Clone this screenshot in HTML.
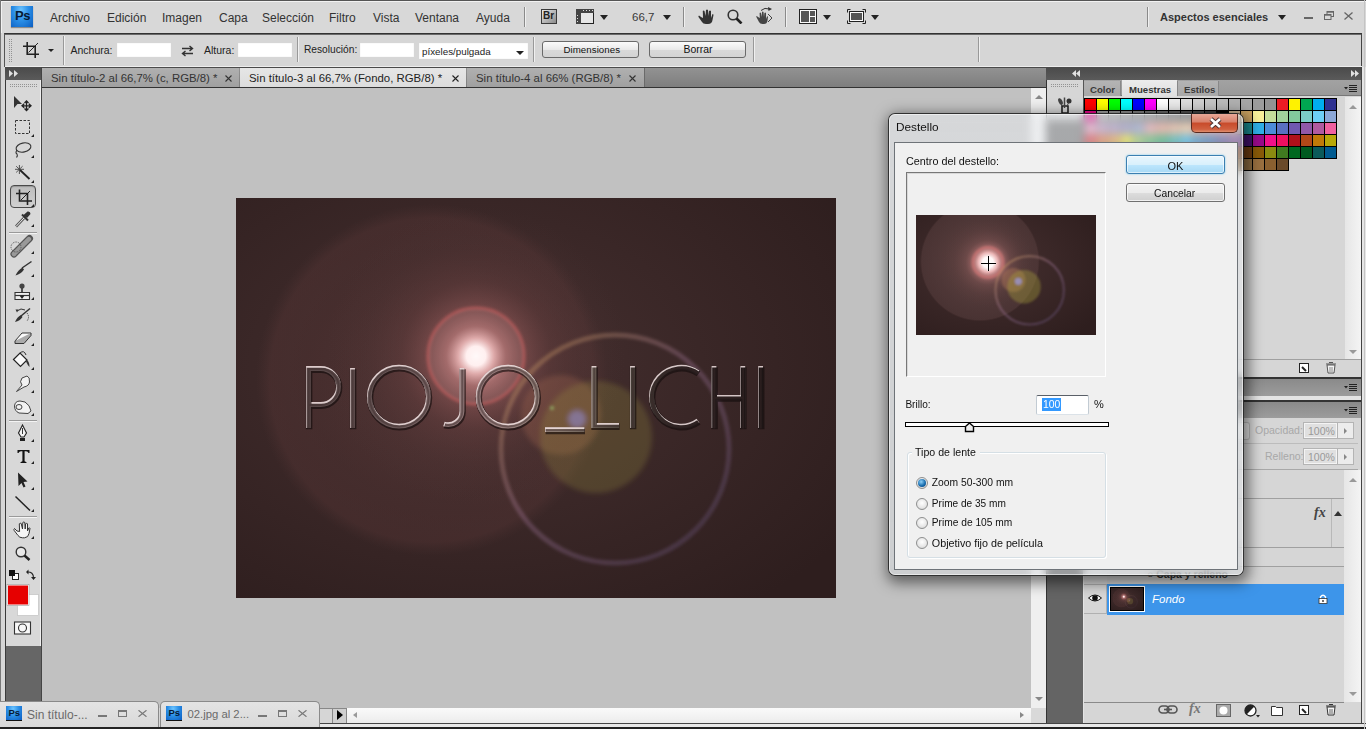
<!DOCTYPE html>
<html><head><meta charset="utf-8">
<style>
*{margin:0;padding:0;box-sizing:border-box}
html,body{width:1366px;height:729px;overflow:hidden;background:#d6d6d6;font-family:"Liberation Sans",sans-serif;position:relative}
.a{position:absolute}
.t{position:absolute;white-space:nowrap;line-height:1}
.mi{top:12px;font-size:12px;color:#333}
.sep{width:1px;height:20px;background:#8a8a8a;border-right:1px solid #f0f0f0;width:2px}
.ol{top:44.7px;font-size:10.5px;color:#222}
.inp{top:43px;height:14px;background:#fff;box-shadow:inset 0 0 1px #ccc}
.btn{top:41px;height:17px;border:1px solid #6a6a6a;border-radius:3px;background:linear-gradient(#fbfbfb,#e9e9e9 50%,#d9d9d9 51%,#d4d4d4)}
.tab{top:68px;height:19px;background:linear-gradient(#b0b0b0,#a0a0a0)}
.tt{top:73px;font-size:11.4px;color:#333}
.tx{top:75px;width:7px;height:7px}
.tsep{left:9px;width:28px;height:1px;background:#9a9a9a;border-bottom:1px solid #f4f4f4;height:2px}
.mw{top:701px;height:26px;border:1px solid #8a8a8a;border-bottom:none;border-radius:5px 5px 0 0;background:linear-gradient(#e4e4e4,#d8d8d8)}
.psi{top:706px;width:16px;height:15px;background:radial-gradient(ellipse at 45% 20%,#6cc4ff 0%,#2a8ee6 45%,#0a5cc0 100%);border-bottom:1px solid #111}
.pst{top:708px;font-size:9.5px;font-weight:bold;color:#071a33}
.mwt{top:708.5px;font-size:12px;color:#6a6a6a}
.pt{top:84.5px;font-size:9.6px;font-weight:bold;color:#3a3a3a}
.pm{width:14px;height:8px}
.sw i{position:absolute;width:11px;height:11px;display:block}
.vbox{left:1303px;width:35px;height:17px;border:1px solid #b4b4b4;background:#e0e0e0;box-shadow:inset 0 0 0 1px #f4f4f4}
.vt{left:1308px;font-size:10.5px;color:#999}
.vbtn{left:1338px;width:16px;height:17px;border:1px solid #b4b4b4;border-left:none;background:#ececec}
.varr{left:1344px;width:0;height:0;border-top:3px solid transparent;border-bottom:3px solid transparent;border-left:3px solid #888}
.dt{color:#111}
.rad{left:916px;width:12px;height:12px;border-radius:50%;border:1px solid #8e8f8f;background:radial-gradient(circle at 50% 40%,#fff,#e6e6e6 60%,#c8c8c8)}
.rl{left:931.8px;font-size:10.3px}
.dots{background-image:linear-gradient(90deg,#8c8c8c 1px,transparent 1px);background-size:2px 2px;-webkit-mask-image:linear-gradient(#000 1px,transparent 1px);-webkit-mask-size:2px 2px;opacity:.9}
.tri{width:0;height:0;border-left:4px solid transparent;border-right:4px solid transparent;border-top:5px solid #222}
</style></head><body>
<!-- outer frame -->
<div class="a" style="left:0;top:0;width:1366px;height:1px;background:#555"></div>
<div class="a" style="left:0;top:0;width:1px;height:729px;background:#777"></div>

<!-- MENU BAR -->
<div id="menubar" class="a" style="left:1px;top:1px;width:1365px;height:32px;background:#d8d8d8;border-top:1px solid #f2f2f2;border-left:1px solid #f2f2f2"></div>
<div class="a" style="left:11px;top:6px;width:22px;height:21px;background:radial-gradient(ellipse at 45% 20%,#6cc4ff 0%,#2a8ee6 45%,#0a5cc0 100%);box-shadow:0 1px 1px rgba(0,0,0,.35)"></div>
<div class="t" style="left:15px;top:9px;font-size:13px;font-weight:bold;color:#071a33;letter-spacing:-0.3px">Ps</div>
<div class="t mi" style="left:50px">Archivo</div>
<div class="t mi" style="left:107px">Edición</div>
<div class="t mi" style="left:162px">Imagen</div>
<div class="t mi" style="left:219px">Capa</div>
<div class="t mi" style="left:262px">Selección</div>
<div class="t mi" style="left:329px">Filtro</div>
<div class="t mi" style="left:373px">Vista</div>
<div class="t mi" style="left:415px">Ventana</div>
<div class="t mi" style="left:476px">Ayuda</div>
<div class="a sep" style="left:524px;top:7px"></div>
<div class="a" style="left:541px;top:9px;width:16px;height:15px;border:1px solid #3a3a3a;background:linear-gradient(135deg,#e8e8e8,#8a8a8a)"></div>
<div class="t" style="left:543px;top:11px;font-size:10px;font-weight:bold;color:#222">Br</div>
<svg class="a" style="left:576px;top:9px" width="18" height="15" viewBox="0 0 18 15"><rect x="0.5" y="0.5" width="17" height="14" fill="#e6e6e6" stroke="#222"/><rect x="0" y="0" width="18" height="4" fill="#444"/><rect x="0" y="0" width="5" height="15" fill="#444"/><g fill="#ddd"><rect x="7" y="1" width="1" height="1"/><rect x="10" y="1" width="1" height="1"/><rect x="13" y="1" width="1" height="1"/><rect x="16" y="1" width="1" height="1"/><rect x="1" y="6" width="1" height="1"/><rect x="1" y="9" width="1" height="1"/><rect x="1" y="12" width="1" height="1"/></g></svg>
<div class="a tri" style="left:600px;top:15px"></div>
<div class="t" style="left:632px;top:12px;font-size:11.5px;color:#3a3a3a">66,7</div>
<div class="a tri" style="left:663px;top:15px"></div>
<div class="a sep" style="left:683px;top:7px"></div>
<svg class="a" style="left:698px;top:9px" width="16" height="15" viewBox="0 0 16 15"><path d="M3 8 L1 6.5 Q0 7 0.5 8 L4 13 Q5 15 8 15 L10 15 Q14 15 14.5 11 L15.5 6 Q15.5 5 14.5 5 L13 9 L13 2 Q12 1 11 2 L10.5 7 L10 1 Q9 0 8 1 L7.5 7 L6.5 2 Q5.5 1 4.8 2 L5 9 Z" fill="#333"/></svg>
<svg class="a" style="left:727px;top:9px" width="16" height="15" viewBox="0 0 16 15"><circle cx="6" cy="6" r="4.8" fill="none" stroke="#333" stroke-width="1.6"/><path d="M9.5 9.5 L14.5 14.5" stroke="#222" stroke-width="2.6"/></svg>
<svg class="a" style="left:756px;top:7px" width="17" height="17" viewBox="0 0 17 17"><path d="M2 10 L0.8 9 Q0 9.5 0.5 10.3 L3 15 Q4 17 6.5 17 L8 17 Q11 17 11.5 13.5 L12 10 Q12 9 11 9.5 L10 12 L10 6 Q9.2 5 8.4 6 L8 10 L7.5 5 Q6.8 4.2 6 5 L5.8 10 L5 6 Q4.3 5.2 3.6 6 L3.8 11 Z" fill="#444"/><path d="M5 3.5 Q9 0 13 2" fill="none" stroke="#333" stroke-width="1"/><path d="M12 0 L16 2 L12.5 4 Z" fill="#333"/><path d="M12 7 L16 11 L12 15" fill="none" stroke="#444" stroke-width="1"/></svg>
<div class="a sep" style="left:785px;top:7px"></div>
<svg class="a" style="left:799px;top:9px" width="18" height="15" viewBox="0 0 18 15"><rect x="0.5" y="0.5" width="17" height="14" fill="#fafafa" stroke="#222"/><rect x="2" y="2" width="8" height="11" fill="#555"/><rect x="11" y="2" width="5" height="5" fill="#555"/><rect x="11" y="8" width="5" height="5" fill="#555"/></svg>
<div class="a tri" style="left:823px;top:15px"></div>
<svg class="a" style="left:847px;top:9px" width="19" height="15" viewBox="0 0 19 15"><path d="M0.5 3.5 V0.5 H3.5 M15.5 0.5 H18.5 V3.5 M18.5 11.5 V14.5 H15.5 M3.5 14.5 H0.5 V11.5" fill="none" stroke="#222" stroke-width="1"/><rect x="2.5" y="2.5" width="14" height="10" fill="#fafafa" stroke="#222"/><rect x="4" y="4" width="11" height="7" fill="#555"/></svg>
<div class="a tri" style="left:871px;top:15px"></div>
<div class="a sep" style="left:1147px;top:7px"></div>
<div class="t" style="left:1160px;top:12px;font-size:11px;font-weight:bold;color:#333">Aspectos esenciales</div>
<div class="a tri" style="left:1278px;top:15px"></div>
<div class="a" style="left:1304px;top:17px;width:9px;height:2px;background:#666"></div>
<svg class="a" style="left:1324px;top:11px" width="10" height="9" viewBox="0 0 10 9"><rect x="3" y="0.5" width="6.5" height="5" fill="none" stroke="#666"/><rect x="0.5" y="3.5" width="6.5" height="5" fill="#d8d8d8" stroke="#666"/><rect x="0.5" y="3.5" width="6.5" height="1.2" fill="#666"/><rect x="3" y="0.5" width="6.5" height="1.2" fill="#666"/></svg>
<svg class="a" style="left:1344px;top:12px" width="9" height="8" viewBox="0 0 9 8"><path d="M0.5 0.5 L8.5 7.5 M8.5 0.5 L0.5 7.5" stroke="#666" stroke-width="1.3"/></svg>

<!-- OPTIONS BAR -->
<div class="a" style="left:4px;top:33px;width:1358px;height:34px;background:#d6d6d6;border-top:1px solid #333;border-left:1px solid #555;border-right:1px solid #444"></div><div class="a" style="left:5px;top:34px;width:1356px;height:1px;background:#6a6a6a"></div>
<div class="a" style="left:5px;top:66px;width:1357px;height:1px;background:#ededed"></div>
<div class="a dots" style="left:9px;top:39px;width:4px;height:23px"></div>
<svg class="a" style="left:22px;top:41px" width="18" height="18" viewBox="0 0 18 18"><path d="M1 5.2 H13 M5.2 1 V13.2 H17 M13.2 5 V17" fill="none" stroke="#222" stroke-width="1.6"/><path d="M6.5 11.5 L16 2" stroke="#111" stroke-width="0.9"/></svg>
<div class="a tri" style="left:48px;top:49px;border-left-width:3px;border-right-width:3px;border-top-width:3.5px"></div>
<div class="a sep" style="left:63px;top:36px;height:29px;background:#999"></div>
<div class="t ol" style="left:70.5px">Anchura:</div>
<div class="a inp" style="left:117px;width:54px"></div>
<svg class="a" style="left:181px;top:45px" width="13" height="12" viewBox="0 0 13 12"><path d="M1 3.5 H11 M8.5 1 L11.5 3.5 L8.5 6 M12 8.5 H2 M4.5 6 L1.5 8.5 L4.5 11" fill="none" stroke="#333" stroke-width="1.4"/></svg>
<div class="t ol" style="left:204px">Altura:</div>
<div class="a inp" style="left:238px;width:54px"></div>
<div class="a sep" style="left:297px;top:37px;height:25px;background:#999"></div>
<div class="t ol" style="left:304px;font-size:10.2px">Resolución:</div>
<div class="a inp" style="left:360px;width:54px"></div>
<div class="a inp" style="left:419px;width:109px;height:16px"></div>
<div class="t" style="left:422px;top:46.8px;font-size:9.8px;color:#222">píxeles/pulgada</div>
<div class="a tri" style="left:516px;top:51px;border-left-width:4px;border-right-width:4px;border-top-width:4px"></div>
<div class="a sep" style="left:533px;top:37px;height:25px;background:#999"></div>
<div class="a btn" style="left:542px;width:97px"></div>
<div class="t ol" style="left:563.5px;top:44.8px;color:#111;font-size:9.7px;letter-spacing:0.05px">Dimensiones</div>
<div class="a btn" style="left:649px;width:97px"></div>
<div class="t ol" style="left:683.5px;top:44.5px;color:#111;font-size:10.4px">Borrar</div>
<div class="a sep" style="left:753px;top:37px;height:25px;background:#999"></div>
<div class="a sep" style="left:978px;top:37px;height:25px;background:#999"></div>

<!-- TAB STRIP -->
<div class="a" style="left:42px;top:67px;width:1004px;height:20px;background:linear-gradient(#4a4a4a,#4a4a4a 1px,#929292 1px,#7e7e7e)"></div>
<div class="a tab" style="left:42px;width:197px"></div>
<div class="t tt" style="left:51px">Sin título-2 al 66,7% (c, RGB/8) *</div>
<svg class="a tx" style="left:224.5px"><path d="M0.5 0.5 L6.5 6.5 M6.5 0.5 L0.5 6.5" stroke="#333" stroke-width="1.1"/></svg>
<div class="a tab" style="left:240px;width:226px;background:linear-gradient(#e6e6e6,#dcdcdc)"></div>
<div class="t tt" style="left:249px;color:#222">Sin título-3 al 66,7% (Fondo, RGB/8) *</div>
<svg class="a tx" style="left:452px"><path d="M0.5 0.5 L6.5 6.5 M6.5 0.5 L0.5 6.5" stroke="#222" stroke-width="1.1"/></svg>
<div class="a tab" style="left:467px;width:178px;border-right:1px solid #6a6a6a"></div>
<div class="t tt" style="left:476px">Sin título-4 al 66% (RGB/8) *</div>
<svg class="a tx" style="left:628.5px"><path d="M0.5 0.5 L6.5 6.5 M6.5 0.5 L0.5 6.5" stroke="#333" stroke-width="1.1"/></svg>
<div class="a" style="left:42px;top:87px;width:1004px;height:1px;background:#333"></div>
<!-- toolbar header -->
<div class="a" style="left:5px;top:67px;width:36px;height:13px;background:linear-gradient(#4a4a4a,#5a5a5a)"></div>

<!-- LEFT TOOLBAR -->
<div class="a" style="left:5px;top:80px;width:36px;height:621px;background:#d8d8d8"></div>
<div class="a" style="left:5px;top:646px;width:36px;height:55px;background:#666"></div>
<div class="a" style="left:5px;top:80px;width:1px;height:621px;background:#3a3a3a"></div>
<div class="a" style="left:40px;top:80px;width:1px;height:566px;background:#efefef"></div>
<!-- header arrows -->
<svg class="a" style="left:9px;top:70px" width="10" height="7" viewBox="0 0 10 7"><path d="M0 0 L4 3.5 L0 7Z M5 0 L9 3.5 L5 7Z" fill="#e0e0e0"/></svg>
<div class="a dots" style="left:10px;top:84px;width:28px;height:4px"></div>
<div class="a tsep" style="top:232px"></div>
<div class="a tsep" style="top:420px"></div>
<div class="a tsep" style="top:516px"></div>
<!-- crop button -->
<div class="a" style="left:10px;top:185px;width:26px;height:23px;border:1px solid #4a4a4a;border-radius:4px;background:linear-gradient(#bdbdbd,#d0d0d0);box-shadow:inset 0 1px 1px rgba(0,0,0,.2)"></div>
<svg class="a" style="left:0;top:0" width="41" height="650" viewBox="0 0 41 650"><path d="M31 137 l3 0 l0 -3z M31 158 l3 0 l0 -3z M31 183 l3 0 l0 -3z M31 207 l3 0 l0 -3z M31 227 l3 0 l0 -3z M31 254 l3 0 l0 -3z M31 277 l3 0 l0 -3z M31 300 l3 0 l0 -3z M31 323 l3 0 l0 -3z M31 346 l3 0 l0 -3z M31 370 l3 0 l0 -3z M31 393 l3 0 l0 -3z M31 416 l3 0 l0 -3z M31 442 l3 0 l0 -3z M31 464 l3 0 l0 -3z M31 490 l3 0 l0 -3z M31 512 l3 0 l0 -3z M31 539 l3 0 l0 -3z" fill="#222"/></svg>
<svg class="a" style="left:0;top:0" width="41" height="650" viewBox="0 0 41 650">
<!-- move -->
<path d="M14 96 L22 104 L17.5 104 L14 108 Z" fill="#333"/>
<path d="M26.5 101 V110.5 M22 105.8 H31 M24.5 103 L26.5 101 L28.5 103 M24.5 108.5 L26.5 110.5 L28.5 108.5 M24.2 103.8 L22 105.8 L24.2 107.8 M28.8 103.8 L31 105.8 L28.8 107.8" fill="none" stroke="#222" stroke-width="1.3"/>
<!-- marquee -->
<rect x="15.5" y="120.5" width="14" height="13" fill="none" stroke="#333" stroke-width="1" stroke-dasharray="2.5 1.5"/>
<!-- lasso -->
<ellipse cx="23.5" cy="147.5" rx="7.5" ry="4.5" fill="none" stroke="#333" stroke-width="1.1" transform="rotate(-12 23.5 147.5)"/>
<path d="M17 150 Q15 153 17 154 Q18 156 16.5 157.5" fill="none" stroke="#333" stroke-width="1.1"/>
<!-- wand -->
<path d="M19.4 165 V174 M15 169.3 H24 M16.2 166.2 L22.6 172.4 M22.6 166.2 L16.2 172.4" stroke="#444" stroke-width="0.9"/>
<path d="M20 170 L29.5 179" stroke="#222" stroke-width="1.8"/>
<!-- crop -->
<path d="M16 193.5 H27.5 M19.5 189.5 V201 H32 M27.5 193 V205" fill="none" stroke="#222" stroke-width="1.6"/>
<path d="M21 200 L30 191" stroke="#111" stroke-width="0.9"/>
<!-- eyedropper -->
<path d="M16 226.5 L24 218" stroke="#555" stroke-width="2.6"/>
<path d="M16 226.5 L24 218" stroke="#f4f4f4" stroke-width="1"/>
<path d="M23 215.5 L27.5 211.5 Q30.5 211 30.5 214 L27 218 Z" fill="#333"/>
<path d="M22 214.5 L28 220.5" stroke="#333" stroke-width="2"/>
<!-- healing -->
<path d="M14 254 L29.5 238.5" stroke="#555" stroke-width="7" stroke-linecap="round"/>
<path d="M14 254 L29.5 238.5" stroke="#999" stroke-width="4.6" stroke-linecap="round" stroke-dasharray="1 1.5"/>
<circle cx="16" cy="247" r="5" fill="none" stroke="#444" stroke-width="1" stroke-dasharray="0.8 1"/>
<!-- brush -->
<path d="M22 268 L31.5 261.5" stroke="#333" stroke-width="1.5"/>
<path d="M15.5 275.5 Q18 270 22.5 267.5 L24 269.5 Q21 274 15.5 275.5Z" fill="#333"/>
<!-- stamp -->
<circle cx="22" cy="286" r="2.6" fill="#444"/>
<path d="M22 288 V292" stroke="#333" stroke-width="1.6"/>
<path d="M15 292.5 H29.5 V299.5 H15 Z" fill="#eee" stroke="#333" stroke-width="1.1"/>
<path d="M15 295.5 H29.5" stroke="#333" stroke-width="1.2"/>
<path d="M19.5 295.5 L22 299 L24.5 295.5Z" fill="#222"/>
<!-- history brush -->
<path d="M21 316 L30 308.5" stroke="#333" stroke-width="1.5"/>
<path d="M15 322 Q17 317 21 315 L22.5 317 Q20 321 15 322Z" fill="#333"/>
<path d="M17 311 Q21 307.5 25 310" fill="none" stroke="#333" stroke-width="1"/>
<path d="M15.5 309.5 L18.5 309.5 L17 312.5Z" fill="#333"/>
<path d="M27 313 Q30 317 27 321" fill="none" stroke="#333" stroke-width="1" stroke-dasharray="1 1"/>
<!-- eraser -->
<path d="M15 341 L22 333 L31 333 L24 341 Z" fill="#fafafa" stroke="#333" stroke-width="1"/>
<path d="M15 341 V343.5 H24 L31 335.5 V333" fill="#aaa" stroke="#333" stroke-width="1"/>
<!-- bucket -->
<path d="M13.5 359.5 L20 353 L27 360 L20.5 366.5 Z" fill="#fafafa" stroke="#222" stroke-width="1.2"/>
<path d="M20 353 Q24 349.5 26 355" fill="none" stroke="#333" stroke-width="1"/>
<path d="M27 360 Q29.5 362 29.5 367 Q27.5 365 26 361.5Z" fill="#333"/>
<!-- smudge finger -->
<path d="M16.5 391.5 L22 385 Q19 382 22 378 L27 376 Q30 377 29.5 382 Q29 386 24 387 Z" fill="#f2f2f2" stroke="#444" stroke-width="1"/>
<!-- dodge hand -->
<path d="M14.5 406 Q15 401 20 401 L25 402 Q30 405 31 411 L28 413.5 L19 413 Q14.5 411 14.5 406 Z" fill="#f2f2f2" stroke="#444" stroke-width="1"/>
<ellipse cx="19" cy="407" rx="3" ry="2.5" fill="none" stroke="#444" stroke-width="1"/>
<!-- pen -->
<path d="M22.5 425 L26.5 433 L24 437 H21 L18.5 433 Z" fill="#f5f5f5" stroke="#222" stroke-width="1.1"/>
<path d="M22.5 428 V434" stroke="#222" stroke-width="0.9"/>
<path d="M20 438 H25 V441 H20 Z" fill="#222"/>
<!-- T -->
<path d="M17.5 450 H29.5 V453 H28.5 Q28 451.3 26 451.3 H24.6 V461.3 L26.5 462.2 V463 H20.5 V462.2 L22.4 461.3 V451.3 H21 Q19 451.3 18.5 453 H17.5 Z" fill="#111"/>
<!-- path select -->
<path d="M18 472.5 L27.5 481.5 L23.5 482 L25.5 486.5 L23.5 487.5 L21.5 483 L18.5 486 Z" fill="#222"/>
<!-- line -->
<path d="M15.5 496.5 L30 510.5" stroke="#222" stroke-width="1.5"/>
<!-- hand -->
<path d="M17 531 L14.5 528.5 Q13.5 529 14.2 530.5 L18 535.5 Q19.5 537.8 22.5 537.8 L24.5 537.8 Q28.5 537.5 29 533.5 L30 528.5 Q29.8 527.5 28.8 528 L27.5 531 L27.5 523.8 Q26.5 523 25.6 523.8 L25.2 529 L24.8 522.5 Q23.8 521.5 22.8 522.5 L22.5 529 L21.2 523.5 Q20.2 522.8 19.3 523.8 L19.6 531.5 Z" fill="#f5f5f5" stroke="#333" stroke-width="1"/>
<!-- zoom -->
<circle cx="21" cy="552" r="4.8" fill="#e9e9e9" stroke="#333" stroke-width="1.4"/>
<path d="M24.5 555.5 L29.5 560" stroke="#222" stroke-width="2.4"/>
<!-- default colors -->
<rect x="12.5" y="573.5" width="6" height="6" fill="#fff" stroke="#222" stroke-width="1"/>
<rect x="9" y="570" width="6" height="6" fill="#111"/>
<path d="M27 572 Q33.5 571.5 33.5 578" fill="none" stroke="#222" stroke-width="1.1"/>
<path d="M26 572 L28.5 569.5 L28.5 574.5Z M31 577 L36 577 L33.5 580Z" fill="#222"/>
<!-- bg white -->
<rect x="17.5" y="594.5" width="21" height="21" fill="#fff" stroke="#bbb" stroke-width="0.6"/>
<rect x="7.5" y="585" width="21" height="20" fill="#e60000" stroke="#fff" stroke-width="1"/>
<rect x="7" y="584.5" width="22" height="21" fill="none" stroke="#888" stroke-width="0.5"/>
<!-- quick mask -->
<rect x="14.5" y="622" width="16" height="12" fill="#f8f8f8" stroke="#333" stroke-width="1.1"/>
<circle cx="22.5" cy="628" r="4" fill="none" stroke="#333" stroke-width="1.1"/>
</svg>
<div class="a" style="left:41px;top:67px;width:1px;height:641px;background:#444"></div>

<!-- CANVAS -->
<div class="a" style="left:42px;top:88px;width:989px;height:620px;background:#c1c1c1"></div>
<!-- v scrollbar -->
<div class="a" style="left:1031px;top:88px;width:15px;height:635px;background:#efefef"></div>
<div class="a" style="left:1046px;top:67px;width:1px;height:656px;background:#333"></div>
<!-- h scrollbar -->
<div class="a" style="left:42px;top:701px;width:989px;height:7px;background:#c1c1c1"></div>
<div class="a" style="left:320px;top:708px;width:711px;height:15px;background:linear-gradient(#fafafa,#ececec)"></div>
<div class="a" style="left:320px;top:708px;width:12px;height:15px;background:#d6d6d6;border-top:1px solid #888"></div>
<div class="a" style="left:332px;top:708px;width:15px;height:15px;background:#d0d0d0;border:1px solid #888;border-bottom:none"></div>
<div class="a" style="left:337px;top:710px;width:0;height:0;border-top:5.5px solid transparent;border-bottom:5.5px solid transparent;border-left:6px solid #000"></div>
<div class="a" style="left:353px;top:712px;width:0;height:0;border-top:3.5px solid transparent;border-bottom:3.5px solid transparent;border-right:4px solid #999"></div>
<div class="a" style="left:1020px;top:712px;width:0;height:0;border-top:3.5px solid transparent;border-bottom:3.5px solid transparent;border-left:4px solid #888"></div>
<div class="a" style="left:1035px;top:697px;width:0;height:0;border-left:4px solid transparent;border-right:4px solid transparent;border-top:4px solid #888"></div>
<div class="a" style="left:1035px;top:95px;width:0;height:0;border-left:4px solid transparent;border-right:4px solid transparent;border-bottom:4px solid #888"></div>
<div class="a" style="left:1031px;top:708px;width:15px;height:15px;background:#d9d9d9"></div>
<!-- minimized windows -->
<div class="a mw" style="left:-4px;width:163px"></div>
<div class="a psi" style="left:6px"></div><div class="t pst" style="left:8.5px">Ps</div>
<div class="t mwt" style="left:27px">Sin título-...</div>
<div class="a" style="left:98px;top:715px;width:9px;height:2px;background:#777"></div>
<div class="a" style="left:118px;top:710px;width:9px;height:7px;border:1px solid #777;border-top-width:2px"></div>
<svg class="a" style="left:138px;top:710px" width="9" height="7" viewBox="0 0 9 7"><path d="M0.5 0.3 L8.5 6.7 M8.5 0.3 L0.5 6.7" stroke="#777" stroke-width="1.2"/></svg>
<div class="a mw" style="left:160px;width:160px"></div>
<div class="a psi" style="left:166px"></div><div class="t pst" style="left:168.5px">Ps</div>
<div class="t mwt" style="left:187.5px;font-size:11.3px">02.jpg al 2...</div>
<div class="a" style="left:258px;top:715px;width:9px;height:2px;background:#777"></div>
<div class="a" style="left:278px;top:710px;width:9px;height:7px;border:1px solid #777;border-top-width:2px"></div>
<svg class="a" style="left:298px;top:710px" width="9" height="7" viewBox="0 0 9 7"><path d="M0.5 0.3 L8.5 6.7 M8.5 0.3 L0.5 6.7" stroke="#777" stroke-width="1.2"/></svg>

<div class="a" style="left:320px;top:723px;width:1046px;height:1px;background:#444"></div>
<div class="a" style="left:320px;top:724px;width:1046px;height:3px;background:#e8e8e8"></div>
<div class="a" style="left:0;top:727px;width:1366px;height:2px;background:#222"></div>

<!-- IMAGE -->
<svg class="a" style="left:236px;top:198px" width="600" height="400" viewBox="0 0 600 400">
<defs>
<symbol id="flare" viewBox="0 0 600 400">
<radialGradient id="bg0" cx="0.4" cy="0.42" r="0.75"><stop offset="0" stop-color="#463030"/><stop offset="1" stop-color="#2e1e1e"/></radialGradient>
<rect width="600" height="400" fill="url(#bg0)"/>
<radialGradient id="halo" cx="0.5" cy="0.5" r="0.5"><stop offset="0" stop-color="#5e3a3a" stop-opacity="0.45"/><stop offset="0.7" stop-color="#543434" stop-opacity="0.38"/><stop offset="0.92" stop-color="#583636" stop-opacity="0.38"/><stop offset="1" stop-color="#4e3232" stop-opacity="0"/></radialGradient>
<circle cx="196" cy="182" r="176" fill="url(#halo)"/>
<radialGradient id="glow" cx="0.5" cy="0.5" r="0.5"><stop offset="0" stop-color="#ffffff"/><stop offset="0.065" stop-color="#fff4f4"/><stop offset="0.12" stop-color="#eab4b4" stop-opacity="0.9"/><stop offset="0.2" stop-color="#c07a7a" stop-opacity="0.65"/><stop offset="0.32" stop-color="#9a5e5e" stop-opacity="0.48"/><stop offset="0.5" stop-color="#7a4a4a" stop-opacity="0.25"/><stop offset="0.75" stop-color="#5e3e3e" stop-opacity="0.1"/><stop offset="1" stop-color="#5a3c3c" stop-opacity="0"/></radialGradient>
<circle cx="240" cy="158" r="150" fill="url(#glow)"/>
<filter id="bl2" x="-20%" y="-20%" width="140%" height="140%"><feGaussianBlur stdDeviation="1.8"/></filter>
<filter id="bl4" x="-30%" y="-30%" width="160%" height="160%"><feGaussianBlur stdDeviation="2.5"/></filter>
<g filter="url(#bl2)">
<circle cx="240" cy="158" r="48" fill="#ffc8c8" fill-opacity="0.1" stroke="#e06464" stroke-opacity="0.5" stroke-width="3"/>
<linearGradient id="ringg" x1="270" y1="140" x2="480" y2="360" gradientUnits="userSpaceOnUse"><stop offset="0" stop-color="#d0a050"/><stop offset="0.45" stop-color="#9a7090"/><stop offset="1" stop-color="#5a4a70"/></linearGradient>
<circle cx="379" cy="251" r="114" fill="none" stroke="url(#ringg)" stroke-opacity="0.38" stroke-width="5"/>
<circle cx="316" cy="210" r="2" fill="#90ff90" fill-opacity="0.6"/>
</g>
<g filter="url(#bl4)">
<circle cx="325" cy="217" r="40" fill="#d08860" fill-opacity="0.2"/>
<circle cx="360" cy="239" r="56" fill="#a8a040" fill-opacity="0.22"/>
<circle cx="341" cy="221" r="9" fill="#9898ff" fill-opacity="0.45"/>
</g>
</symbol>
<symbol id="flareP" viewBox="0 0 600 400">
<rect width="600" height="400" fill="url(#bg0)"/>
<radialGradient id="haloP" cx="0.5" cy="0.5" r="0.5"><stop offset="0" stop-color="#6a4a48" stop-opacity="0.8"/><stop offset="0.75" stop-color="#5a4040" stop-opacity="0.6"/><stop offset="0.97" stop-color="#5a4040" stop-opacity="0.5"/><stop offset="1" stop-color="#4e3434" stop-opacity="0"/></radialGradient>
<circle cx="213" cy="155" r="200" fill="url(#haloP)"/>
<radialGradient id="glowP" cx="0.5" cy="0.5" r="0.5"><stop offset="0" stop-color="#ffffff"/><stop offset="0.12" stop-color="#fff8f8"/><stop offset="0.22" stop-color="#f0b8b8" stop-opacity="0.95"/><stop offset="0.34" stop-color="#c07a7a" stop-opacity="0.6"/><stop offset="0.5" stop-color="#8a5a5a" stop-opacity="0.35"/><stop offset="0.75" stop-color="#6a4646" stop-opacity="0.15"/><stop offset="1" stop-color="#5a3c3c" stop-opacity="0"/></radialGradient>
<circle cx="240" cy="158" r="150" fill="url(#glowP)"/>
<filter id="bl8" x="-30%" y="-30%" width="160%" height="160%"><feGaussianBlur stdDeviation="4"/></filter>
<g filter="url(#bl8)">
<circle cx="240" cy="158" r="50" fill="none" stroke="#f08080" stroke-opacity="0.45" stroke-width="9"/>
<circle cx="379" cy="251" r="114" fill="none" stroke="url(#ringg)" stroke-opacity="0.5" stroke-width="7"/>
<circle cx="325" cy="217" r="40" fill="#d09060" fill-opacity="0.3"/>
<circle cx="360" cy="239" r="56" fill="#b0a840" fill-opacity="0.35"/>
<circle cx="341" cy="221" r="12" fill="#a0a0ff" fill-opacity="0.6"/>
</g>
</symbol>
<linearGradient id="txg" x1="300" y1="0" x2="770" y2="0" gradientUnits="userSpaceOnUse"><stop offset="0" stop-color="#544444"/><stop offset="0.2" stop-color="#685656"/><stop offset="0.4" stop-color="#967c7c"/><stop offset="0.55" stop-color="#8a7a70"/><stop offset="0.68" stop-color="#4e463e"/><stop offset="0.8" stop-color="#2a2020"/><stop offset="1" stop-color="#1c1414"/></linearGradient>
</defs>
<use href="#flare" width="600" height="400"/>
<g fill="none" stroke-width="4.2" transform="translate(-236,-198)">
<g stroke="#140c0c" stroke-opacity="0.65" stroke-width="6.5" transform="translate(0.6,1.2)">
<path id="txt" d="M308.5 428 V368.5 H320.5 A18 18 0 0 1 320.5 404.5 H308.5 M352.5 368 V428 M398.9 396.6 m-29.5 0 a29.5 29.5 0 1 0 59 0 a29.5 29.5 0 1 0 -59 0 M462 368 V411 A14 14 0 0 1 444 424 M507.7 396.6 m-29.5 0 a29.5 29.5 0 1 0 59 0 a29.5 29.5 0 1 0 -59 0 M545 429.7 H584.4 M594 366 V425.5 H619 M632.5 366 V428 M698 372.5 A29.5 29.5 0 1 0 698 420.7 M714 366 V428 M742.8 366 V428 M714 397.4 H742.8 M760.6 366 V428"/>
</g>
<path d="M308.5 428 V368.5 H320.5 A18 18 0 0 1 320.5 404.5 H308.5 M352.5 368 V428 M398.9 396.6 m-29.5 0 a29.5 29.5 0 1 0 59 0 a29.5 29.5 0 1 0 -59 0 M462 368 V411 A14 14 0 0 1 444 424 M507.7 396.6 m-29.5 0 a29.5 29.5 0 1 0 59 0 a29.5 29.5 0 1 0 -59 0 M545 429.7 H584.4 M594 366 V425.5 H619 M632.5 366 V428 M698 372.5 A29.5 29.5 0 1 0 698 420.7 M714 366 V428 M742.8 366 V428 M714 397.4 H742.8 M760.6 366 V428" stroke="url(#txg)" stroke-width="4.8"/>
<path d="M308.5 428 V368.5 H320.5 A18 18 0 0 1 320.5 404.5 H308.5 M352.5 368 V428 M398.9 396.6 m-29.5 0 a29.5 29.5 0 1 0 59 0 a29.5 29.5 0 1 0 -59 0 M462 368 V411 A14 14 0 0 1 444 424 M507.7 396.6 m-29.5 0 a29.5 29.5 0 1 0 59 0 a29.5 29.5 0 1 0 -59 0 M545 429.7 H584.4 M594 366 V425.5 H619 M632.5 366 V428 M698 372.5 A29.5 29.5 0 1 0 698 420.7 M714 366 V428 M742.8 366 V428 M714 397.4 H742.8 M760.6 366 V428" stroke="#3a2828" stroke-opacity="0.45" stroke-width="1.8" transform="translate(0.3,0.5)"/>
<mask id="tmask" maskUnits="userSpaceOnUse" x="0" y="0" width="1366" height="729"><path d="M308.5 428 V368.5 H320.5 A18 18 0 0 1 320.5 404.5 H308.5 M352.5 368 V428 M398.9 396.6 m-29.5 0 a29.5 29.5 0 1 0 59 0 a29.5 29.5 0 1 0 -59 0 M462 368 V411 A14 14 0 0 1 444 424 M507.7 396.6 m-29.5 0 a29.5 29.5 0 1 0 59 0 a29.5 29.5 0 1 0 -59 0 M545 429.7 H584.4 M594 366 V425.5 H619 M632.5 366 V428 M698 372.5 A29.5 29.5 0 1 0 698 420.7 M714 366 V428 M742.8 366 V428 M714 397.4 H742.8 M760.6 366 V428" stroke="#fff" stroke-width="4.8" fill="none"/><path d="M308.5 428 V368.5 H320.5 A18 18 0 0 1 320.5 404.5 H308.5 M352.5 368 V428 M398.9 396.6 m-29.5 0 a29.5 29.5 0 1 0 59 0 a29.5 29.5 0 1 0 -59 0 M462 368 V411 A14 14 0 0 1 444 424 M507.7 396.6 m-29.5 0 a29.5 29.5 0 1 0 59 0 a29.5 29.5 0 1 0 -59 0 M545 429.7 H584.4 M594 366 V425.5 H619 M632.5 366 V428 M698 372.5 A29.5 29.5 0 1 0 698 420.7 M714 366 V428 M742.8 366 V428 M714 397.4 H742.8 M760.6 366 V428" stroke="#000" stroke-width="4.8" fill="none" transform="translate(0.6,1.6)"/></mask>
<rect x="0" y="0" width="1366" height="729" fill="#f4e4e4" fill-opacity="0.85" mask="url(#tmask)"/>
</g>
</svg>

<!-- RIGHT DOCK -->
<div class="a" style="left:1046px;top:67px;width:315px;height:13px;background:linear-gradient(#4a4a4a,#5a5a5a)"></div>
<div class="a" style="left:1047px;top:80px;width:36px;height:643px;background:#646464"></div>
<div class="a" style="left:1047px;top:80px;width:36px;height:40px;background:#d6d6d6"></div>

<!-- PANELS -->
<div class="a" style="left:1083px;top:80px;width:279px;height:643px;background:#d6d6d6"></div>
<!-- dock col top -->
<div class="a dots" style="left:1051px;top:84px;width:28px;height:4px"></div>
<div class="a" style="left:1083px;top:80px;width:1px;height:300px;background:#555"></div><div class="a" style="left:1083px;top:380px;width:1px;height:343px;background:#e4e4e4"></div>
<!-- header arrows -->
<svg class="a" style="left:1072px;top:70px" width="8" height="7" viewBox="0 0 8 7"><path d="M4 0 L0 3.5 L4 7Z M8 0 L4 3.5 L8 7Z" fill="#e0e0e0"/></svg>
<svg class="a" style="left:1351px;top:70px" width="8" height="7" viewBox="0 0 8 7"><path d="M0 0 L4 3.5 L0 7Z M4 0 L8 3.5 L4 7Z" fill="#e0e0e0"/></svg>
<!-- group 1 tabs -->
<div class="a" style="left:1084px;top:80px;width:277px;height:16px;background:linear-gradient(#a2a2a2,#999);border-bottom:1px solid #777"></div>
<div class="a" style="left:1084px;top:81px;width:37px;height:15px;background:linear-gradient(#b4b4b4,#a8a8a8);border-right:1px solid #888"></div>
<div class="a" style="left:1122px;top:80px;width:55px;height:17px;background:linear-gradient(#ececec,#dedede)"></div>
<div class="a" style="left:1177px;top:81px;width:42px;height:15px;background:linear-gradient(#b4b4b4,#a8a8a8);border-left:1px solid #888;border-right:1px solid #888"></div>
<div class="t pt" style="left:1090px">Color</div>
<div class="t pt" style="left:1129px;color:#333">Muestras</div>
<div class="t pt" style="left:1184px">Estilos</div>
<svg class="a pm" style="left:1344px;top:85px"><path d="M0 2 H4 L2 4.5Z" fill="#222"/><path d="M5 0.5 H13 M5 2.5 H13 M5 4.5 H13 M5 6.5 H13" stroke="#222" stroke-width="1"/></svg>
<div class="a sw" style="left:1084px;top:98px;width:253px;height:73px;background:linear-gradient(#000,#000) 0 0/253px 61px no-repeat,linear-gradient(#000,#000) 0 61px/205px 12px no-repeat"><i style="left:1px;top:1px;background:#ff0000"></i><i style="left:13px;top:1px;background:#ffff00"></i><i style="left:25px;top:1px;background:#00ff00"></i><i style="left:37px;top:1px;background:#00ffff"></i><i style="left:49px;top:1px;background:#0000ff"></i><i style="left:61px;top:1px;background:#ff00ff"></i><i style="left:73px;top:1px;background:#ffffff"></i><i style="left:85px;top:1px;background:#ebebeb"></i><i style="left:97px;top:1px;background:#dcdcdc"></i><i style="left:109px;top:1px;background:#cfcfcf"></i><i style="left:121px;top:1px;background:#c4c4c4"></i><i style="left:133px;top:1px;background:#bababa"></i><i style="left:145px;top:1px;background:#b0b0b0"></i><i style="left:157px;top:1px;background:#a6a6a6"></i><i style="left:169px;top:1px;background:#9c9c9c"></i><i style="left:181px;top:1px;background:#929292"></i><i style="left:193px;top:1px;background:#ed1c24"></i><i style="left:205px;top:1px;background:#fff200"></i><i style="left:217px;top:1px;background:#00a651"></i><i style="left:229px;top:1px;background:#00aeef"></i><i style="left:241px;top:1px;background:#2e3192"></i><i style="left:1px;top:13px;background:#ec008c"></i><i style="left:13px;top:13px;background:#a0a0a0"></i><i style="left:25px;top:13px;background:#989898"></i><i style="left:37px;top:13px;background:#8c8c8c"></i><i style="left:49px;top:13px;background:#808080"></i><i style="left:61px;top:13px;background:#747474"></i><i style="left:73px;top:13px;background:#686868"></i><i style="left:85px;top:13px;background:#5c5c5c"></i><i style="left:97px;top:13px;background:#505050"></i><i style="left:109px;top:13px;background:#444444"></i><i style="left:121px;top:13px;background:#383838"></i><i style="left:133px;top:13px;background:#000000"></i><i style="left:145px;top:13px;background:#c8b090"></i><i style="left:157px;top:13px;background:#c8a060"></i><i style="left:169px;top:13px;background:#f8f09a"></i><i style="left:181px;top:13px;background:#c4df9b"></i><i style="left:193px;top:13px;background:#a2d39c"></i><i style="left:205px;top:13px;background:#82ca9d"></i><i style="left:217px;top:13px;background:#7bcdc8"></i><i style="left:229px;top:13px;background:#6ecff6"></i><i style="left:241px;top:13px;background:#8ca8d8"></i><i style="left:1px;top:25px;background:#f49ac2"></i><i style="left:13px;top:25px;background:#bc8dbf"></i><i style="left:25px;top:25px;background:#a187be"></i><i style="left:37px;top:25px;background:#8882be"></i><i style="left:49px;top:25px;background:#8493ca"></i><i style="left:61px;top:25px;background:#f6989d"></i><i style="left:73px;top:25px;background:#f7977a"></i><i style="left:85px;top:25px;background:#f9ad81"></i><i style="left:97px;top:25px;background:#fdc68a"></i><i style="left:109px;top:25px;background:#f7977a"></i><i style="left:121px;top:25px;background:#f6989d"></i><i style="left:133px;top:25px;background:#e0a0a0"></i><i style="left:145px;top:25px;background:#d09080"></i><i style="left:157px;top:25px;background:#1a8a90"></i><i style="left:169px;top:25px;background:#30b0e8"></i><i style="left:181px;top:25px;background:#4c8cd8"></i><i style="left:193px;top:25px;background:#5a70c0"></i><i style="left:205px;top:25px;background:#7058b0"></i><i style="left:217px;top:25px;background:#9058a8"></i><i style="left:229px;top:25px;background:#b05aa0"></i><i style="left:241px;top:25px;background:#f060a0"></i><i style="left:1px;top:37px;background:#ed1c24"></i><i style="left:13px;top:37px;background:#f26522"></i><i style="left:25px;top:37px;background:#f7941d"></i><i style="left:37px;top:37px;background:#fff200"></i><i style="left:49px;top:37px;background:#8dc63f"></i><i style="left:61px;top:37px;background:#39b54a"></i><i style="left:73px;top:37px;background:#00a651"></i><i style="left:85px;top:37px;background:#00a99d"></i><i style="left:97px;top:37px;background:#00aeef"></i><i style="left:109px;top:37px;background:#0072bc"></i><i style="left:121px;top:37px;background:#0054a6"></i><i style="left:133px;top:37px;background:#2e3192"></i><i style="left:145px;top:37px;background:#662d91"></i><i style="left:157px;top:37px;background:#40106a"></i><i style="left:169px;top:37px;background:#9a0a8a"></i><i style="left:181px;top:37px;background:#f0108a"></i><i style="left:193px;top:37px;background:#f01060"></i><i style="left:205px;top:37px;background:#b0101a"></i><i style="left:217px;top:37px;background:#b04818"></i><i style="left:229px;top:37px;background:#c07a08"></i><i style="left:241px;top:37px;background:#b8a808"></i><i style="left:1px;top:49px;background:#598527"></i><i style="left:13px;top:49px;background:#197b30"></i><i style="left:25px;top:49px;background:#007236"></i><i style="left:37px;top:49px;background:#00746b"></i><i style="left:49px;top:49px;background:#0076a3"></i><i style="left:61px;top:49px;background:#004b80"></i><i style="left:73px;top:49px;background:#003471"></i><i style="left:85px;top:49px;background:#1b1464"></i><i style="left:97px;top:49px;background:#440e62"></i><i style="left:109px;top:49px;background:#630460"></i><i style="left:121px;top:49px;background:#9e005d"></i><i style="left:133px;top:49px;background:#790000"></i><i style="left:145px;top:49px;background:#7b2e00"></i><i style="left:157px;top:49px;background:#6a3a10"></i><i style="left:169px;top:49px;background:#8a5a08"></i><i style="left:181px;top:49px;background:#8a8a10"></i><i style="left:193px;top:49px;background:#407a20"></i><i style="left:205px;top:49px;background:#006820"></i><i style="left:217px;top:49px;background:#005a20"></i><i style="left:229px;top:49px;background:#0a5a5a"></i><i style="left:241px;top:49px;background:#005a90"></i><i style="left:1px;top:61px;background:#c7b299"></i><i style="left:13px;top:61px;background:#998675"></i><i style="left:25px;top:61px;background:#736357"></i><i style="left:37px;top:61px;background:#534741"></i><i style="left:49px;top:61px;background:#37302a"></i><i style="left:61px;top:61px;background:#c69c6d"></i><i style="left:73px;top:61px;background:#a67c52"></i><i style="left:85px;top:61px;background:#8c6239"></i><i style="left:97px;top:61px;background:#754c24"></i><i style="left:109px;top:61px;background:#603913"></i><i style="left:121px;top:61px;background:#8a6a40"></i><i style="left:133px;top:61px;background:#8a6a40"></i><i style="left:145px;top:61px;background:#8a6a40"></i><i style="left:157px;top:61px;background:#8a6a40"></i><i style="left:169px;top:61px;background:#9a7040"></i><i style="left:181px;top:61px;background:#8a6030"></i><i style="left:193px;top:61px;background:#6a4a2a"></i></div>
<!-- swatches scrollbar -->
<div class="a" style="left:1345px;top:97px;width:16px;height:262px;background:linear-gradient(90deg,#e6e6e6,#f4f4f4)"></div>
<div class="a" style="left:1349px;top:105px;width:0;height:0;border-left:4px solid transparent;border-right:4px solid transparent;border-bottom:4px solid #999"></div>
<div class="a" style="left:1349px;top:350px;width:0;height:0;border-left:4px solid transparent;border-right:4px solid transparent;border-top:4px solid #999"></div>
<div class="a" style="left:1084px;top:359px;width:277px;height:1px;background:#a0a0a0"></div>
<svg class="a" style="left:1298px;top:362px" width="12" height="12" viewBox="0 0 12 12"><rect x="1.5" y="1.5" width="9" height="9" fill="#fff" stroke="#222"/><path d="M4 5 L8 9" stroke="#222" stroke-width="2"/></svg>
<svg class="a" style="left:1325px;top:361px" width="12" height="13" viewBox="0 0 12 13"><path d="M2 4 H10 L9 12 H3Z" fill="#f4f4f4" stroke="#555"/><path d="M1 3 H11 M4 1.5 H8" stroke="#555"/><path d="M5 6 V11 M7 6 V11" stroke="#888"/></svg>
<div class="a" style="left:1349px;top:364px;width:10px;height:10px;background-image:radial-gradient(circle,#777 0.6px,transparent 0.7px);background-size:2px 2px;clip-path:polygon(100% 0,100% 100%,0 100%)"></div>
<!-- group 2 collapsed -->
<div class="a" style="left:1084px;top:377px;width:277px;height:2px;background:#333"></div>
<div class="a" style="left:1084px;top:379px;width:277px;height:17px;background:linear-gradient(#8a8a8a,#9c9c9c)"></div>
<svg class="a pm" style="left:1344px;top:384px"><path d="M0 2 H4 L2 4.5Z" fill="#222"/><path d="M5 0.5 H13 M5 2.5 H13 M5 4.5 H13 M5 6.5 H13" stroke="#222" stroke-width="1"/></svg>
<div class="a" style="left:1084px;top:396px;width:277px;height:4px;background:#e4e4e4"></div>
<!-- group 3 layers -->
<div class="a" style="left:1084px;top:400px;width:277px;height:2px;background:#333"></div>
<div class="a" style="left:1084px;top:402px;width:277px;height:16px;background:linear-gradient(#8a8a8a,#9c9c9c)"></div>
<svg class="a pm" style="left:1344px;top:407px"><path d="M0 2 H4 L2 4.5Z" fill="#222"/><path d="M5 0.5 H13 M5 2.5 H13 M5 4.5 H13 M5 6.5 H13" stroke="#222" stroke-width="1"/></svg>
<div class="a" style="left:1236px;top:422px;width:14px;height:18px;border:1px solid #b8b8b8;border-left:none;border-radius:0 3px 3px 0;background:#e2e2e2"></div>
<div class="t" style="left:1255px;top:425px;font-size:10.5px;color:#a8a8a8">Opacidad:</div>
<div class="a vbox" style="top:422px"></div><div class="t vt" style="top:426px">100%</div>
<div class="a vbtn" style="top:422px"></div><div class="a varr" style="top:428px"></div>
<div class="a" style="left:1084px;top:443px;width:274px;height:1px;background:#bcbcbc"></div>
<div class="t" style="left:1265px;top:451px;font-size:10.5px;color:#a8a8a8">Relleno:</div>
<div class="a vbox" style="top:448px"></div><div class="t vt" style="top:452px">100%</div>
<div class="a vbtn" style="top:448px"></div><div class="a varr" style="top:454px"></div>
<div class="a" style="left:1084px;top:469px;width:274px;height:1px;background:#a8a8a8"></div>
<!-- layers list -->
<div class="a" style="left:1344px;top:470px;width:17px;height:232px;background:linear-gradient(90deg,#e6e6e6,#f4f4f4)"></div>
<div class="a" style="left:1349px;top:478px;width:0;height:0;border-left:4px solid transparent;border-right:4px solid transparent;border-bottom:4px solid #999"></div>
<div class="a" style="left:1349px;top:692px;width:0;height:0;border-left:4px solid transparent;border-right:4px solid transparent;border-top:4px solid #999"></div>
<div class="a" style="left:1084px;top:498px;width:260px;height:1px;background:#a0a0a0"></div>
<div class="t" style="left:1314px;top:506px;font-size:14px;font-style:italic;font-weight:bold;color:#444;font-family:'Liberation Serif',serif">fx</div>
<div class="a" style="left:1331px;top:499px;width:1px;height:48px;background:#b8b8b8"></div>
<div class="a" style="left:1334px;top:511px;width:0;height:0;border-left:4px solid transparent;border-right:4px solid transparent;border-bottom:5px solid #333"></div>
<div class="a" style="left:1084px;top:547px;width:260px;height:1px;background:#a0a0a0"></div>
<div class="a" style="left:1084px;top:566px;width:260px;height:1px;background:#a0a0a0"></div>
<div class="a" style="left:1107px;top:567px;width:237px;height:17px;background:#d2d2d2"></div>
<div class="a" style="left:1084px;top:584px;width:23px;height:30px;background:#d6d6d6;border:1px solid #b0b0b0;border-left:none"></div>
<svg class="a" style="left:1088px;top:593px" width="14" height="10" viewBox="0 0 14 10"><path d="M0.5 5 Q7 -1 13.5 5 Q7 11 0.5 5Z" fill="#fff" stroke="#111"/><circle cx="7" cy="5" r="2.8" fill="#111"/></svg>
<div class="a" style="left:1107px;top:584px;width:237px;height:31px;background:#3d95ea"></div>
<div class="a" style="left:1109px;top:586px;width:36px;height:26px;border:1px solid #fff;background:#000"></div>
<svg class="a" style="left:1111px;top:588px" width="32" height="22" viewBox="0 0 600 400" preserveAspectRatio="none"><use href="#flare" width="600" height="400"/></svg>
<div class="t" style="left:1152px;top:594px;font-size:11.5px;font-style:italic;color:#fff">Fondo</div>
<svg class="a" style="left:1318px;top:594px" width="10" height="10" viewBox="0 0 10 10"><path d="M2.5 5 V3 Q5 -0.5 7.5 3 V5" fill="none" stroke="#fff" stroke-width="1.4"/><rect x="1" y="4.5" width="8" height="5" fill="#fff" stroke="#333" stroke-width="0.8"/><rect x="4.3" y="6" width="1.4" height="2" fill="#333"/></svg>
<div class="a" style="left:1084px;top:702px;width:260px;height:1px;background:#8a8a8a"></div>
<div class="t" style="left:1147px;top:569px;font-size:10.5px;font-weight:bold;color:#333">&#9675; Capa y relleno</div>
<svg class="a" style="left:1158px;top:704px" width="20" height="11" viewBox="0 0 20 11"><rect x="1" y="2" width="10" height="7" rx="3.5" fill="none" stroke="#555" stroke-width="1.6"/><rect x="9" y="2" width="10" height="7" rx="3.5" fill="none" stroke="#555" stroke-width="1.6"/><path d="M6 5.5 H14" stroke="#555" stroke-width="1.6"/></svg>
<div class="t" style="left:1189px;top:702px;font-size:14px;font-style:italic;font-weight:bold;color:#777;font-family:'Liberation Serif',serif">fx</div>
<svg class="a" style="left:1216px;top:704px" width="15" height="13" viewBox="0 0 15 13"><rect x="0.5" y="0.5" width="14" height="12" fill="#aaa" stroke="#666"/><circle cx="7.5" cy="6.5" r="4" fill="#fff"/></svg>
<svg class="a" style="left:1244px;top:704px" width="16" height="14" viewBox="0 0 16 14"><circle cx="6.5" cy="6.5" r="5.5" fill="#fff" stroke="#222" stroke-width="1.3"/><path d="M2.6 10.4 A5.5 5.5 0 0 1 10.4 2.6 Z" fill="#222"/><path d="M12 11 H16 L14 13.5Z" fill="#222"/></svg>
<svg class="a" style="left:1271px;top:705px" width="12" height="11" viewBox="0 0 12 11"><path d="M0.5 1.5 H4.5 L5.5 2.5 H11.5 V10.5 H0.5 Z" fill="#fff" stroke="#333"/></svg>
<svg class="a" style="left:1298px;top:704px" width="12" height="12" viewBox="0 0 12 12"><rect x="1.5" y="1.5" width="9" height="9" fill="#fff" stroke="#222"/><path d="M4 5 L8 9" stroke="#222" stroke-width="2"/></svg>
<svg class="a" style="left:1325px;top:703px" width="12" height="13" viewBox="0 0 12 13"><path d="M2 4 H10 L9 12 H3Z" fill="#f4f4f4" stroke="#333"/><path d="M1 3 H11 M4 1.5 H8" stroke="#333"/><path d="M5 6 V11 M7 6 V11" stroke="#666"/></svg>
<svg class="a" style="left:1057px;top:96px" width="16" height="17" viewBox="0 0 16 17"><path d="M5 10 V17 H11 V10 Z" fill="none" stroke="#222" stroke-width="1.6"/><path d="M7.5 12 V1.5" stroke="#444" stroke-width="1.5"/><ellipse cx="3.5" cy="5.5" rx="2" ry="3.5" fill="#444" transform="rotate(-25 3.5 5.5)"/><ellipse cx="12" cy="5" rx="2.5" ry="2.5" fill="#333"/><path d="M5 10 L3.5 7 M10 10 L12 6" stroke="#444" stroke-width="1"/></svg>


<div class="a" style="left:1361px;top:67px;width:5px;height:656px;background:#e6e6e6;border-left:1px solid #444"></div><div class="a" style="left:1364px;top:0;width:1px;height:729px;background:#c4c4c4"></div>

<!-- DIALOG -->
<div class="a" style="left:888px;top:113px;width:356px;height:463px;border-radius:7px;box-shadow:2px 4px 14px 3px rgba(0,0,0,.5)"></div>
<div class="a" style="left:888px;top:113px;width:356px;height:463px;border:1px solid rgba(20,20,20,.85);border-radius:7px;backdrop-filter:blur(4px);-webkit-backdrop-filter:blur(4px);background:linear-gradient(rgba(235,238,242,.5),rgba(220,224,228,.45))"></div>
<div class="a" style="left:889px;top:114px;width:354px;height:461px;border:1px solid rgba(255,255,255,.55);border-radius:6px"></div>
<div class="t" style="left:896px;top:121.5px;font-size:11.8px;color:#111">Destello</div>
<div class="a" style="left:1191px;top:114px;width:47px;height:19px;border:1px solid #5a2a20;border-top:none;border-radius:0 0 5px 5px;background:linear-gradient(#e8a898,#d8806a 45%,#c84a2a 50%,#d06040 85%,#e09070)"></div>
<svg class="a" style="left:1207px;top:116px" width="17" height="14" viewBox="0 0 17 14"><path d="M4 3 L13 11 M13 3 L4 11" stroke="#4a3030" stroke-width="4.4"/><path d="M4 3 L13 11 M13 3 L4 11" stroke="#fff" stroke-width="2.6"/></svg>
<div class="a" style="left:894px;top:142px;width:344px;height:428px;background:#f0f0f0;border:1px solid #6e7378"></div>
<div class="t dt" style="left:906px;top:155.8px;font-size:10.8px">Centro del destello:</div>
<div class="a" style="left:906px;top:172px;width:200px;height:205px;border:1px solid;border-color:#777 #fff #fff #777;box-shadow:inset 1px 1px 0 #d8d8d8"></div>
<svg class="a" style="left:916px;top:215px" width="180" height="120" viewBox="0 0 600 400" preserveAspectRatio="none"><use href="#flareP" width="600" height="400"/></svg>
<svg class="a" style="left:981px;top:256px" width="15" height="15" viewBox="0 0 15 15"><path d="M7.5 0 V15 M0 7.5 H15" stroke="#fff" stroke-opacity=".6" stroke-width="2.2"/><path d="M7.5 0 V15 M0 7.5 H15" stroke="#000" stroke-width="1"/></svg>
<div class="a" style="left:1126px;top:155px;width:99px;height:19px;border:1px solid #3c7fb1;border-radius:3px;background:linear-gradient(#eaf6fd,#d9f0fc 50%,#bee6fd 51%,#a7d9f5);box-shadow:inset 0 0 0 1px rgba(255,255,255,.6), 0 0 2px #6ec8f0"></div>
<div class="t dt" style="left:1167.5px;top:160.5px;font-size:11px">OK</div>
<div class="a" style="left:1126px;top:183px;width:99px;height:19px;border:1px solid #707070;border-radius:3px;background:linear-gradient(#f2f2f2,#ebebeb 50%,#dddddd 51%,#cfcfcf);box-shadow:inset 0 0 0 1px rgba(255,255,255,.7)"></div>
<div class="t dt" style="left:1154px;top:188.5px;font-size:10.3px">Cancelar</div>
<div class="t dt" style="left:905.4px;top:399.6px;font-size:10.1px">Brillo:</div>
<div class="a" style="left:1036px;top:395px;width:53px;height:20px;border:1px solid;border-color:#5a6068 #c2cbd3 #dbe2e8 #c2cbd3;border-radius:2px;background:#fff"></div>
<div class="a" style="left:1042px;top:398px;width:19px;height:13px;background:#3399ff"></div>
<div class="t" style="left:1043px;top:399.5px;font-size:10.4px;color:#fff">100</div>
<div class="t dt" style="left:1094px;top:399px;font-size:11px">%</div>
<div class="a" style="left:905px;top:422px;width:204px;height:5px;border:1.5px solid #000;background:#fff"></div>
<svg class="a" style="left:964px;top:422px" width="11" height="11" viewBox="0 0 11 11"><path d="M1.5 9.5 V4.5 L5.5 1 L9.5 4.5 V9.5 Z" fill="#ececec" stroke="#000" stroke-width="1.4"/></svg>
<div class="a" style="left:907px;top:452px;width:199px;height:106px;border:1px solid #d5dfe5;border-radius:3px;box-shadow:inset 1px 1px 0 #fff, 1px 1px 0 #fff"></div>
<div class="a" style="left:912px;top:447px;width:68px;height:10px;background:#f0f0f0"></div>
<div class="t dt" style="left:915px;top:447px;font-size:10.6px">Tipo de lente</div>
<div class="a rad" style="top:477px"></div><div class="a" style="left:918px;top:479px;width:8px;height:8px;border-radius:50%;background:radial-gradient(circle at 40% 35%,#8fd0f8,#1a6fb0 55%,#0a3a70)"></div>
<div class="t dt rl" style="top:478px">Zoom 50-300 mm</div>
<div class="a rad" style="top:498px"></div>
<div class="t dt rl" style="top:499px;font-size:10.1px">Prime de 35 mm</div>
<div class="a rad" style="top:517px"></div>
<div class="t dt rl" style="top:518px;font-size:10.2px">Prime de 105 mm</div>
<div class="a rad" style="top:537px"></div>
<div class="t dt rl" style="top:538px;font-size:10.75px">Objetivo fijo de película</div>


</body></html>
